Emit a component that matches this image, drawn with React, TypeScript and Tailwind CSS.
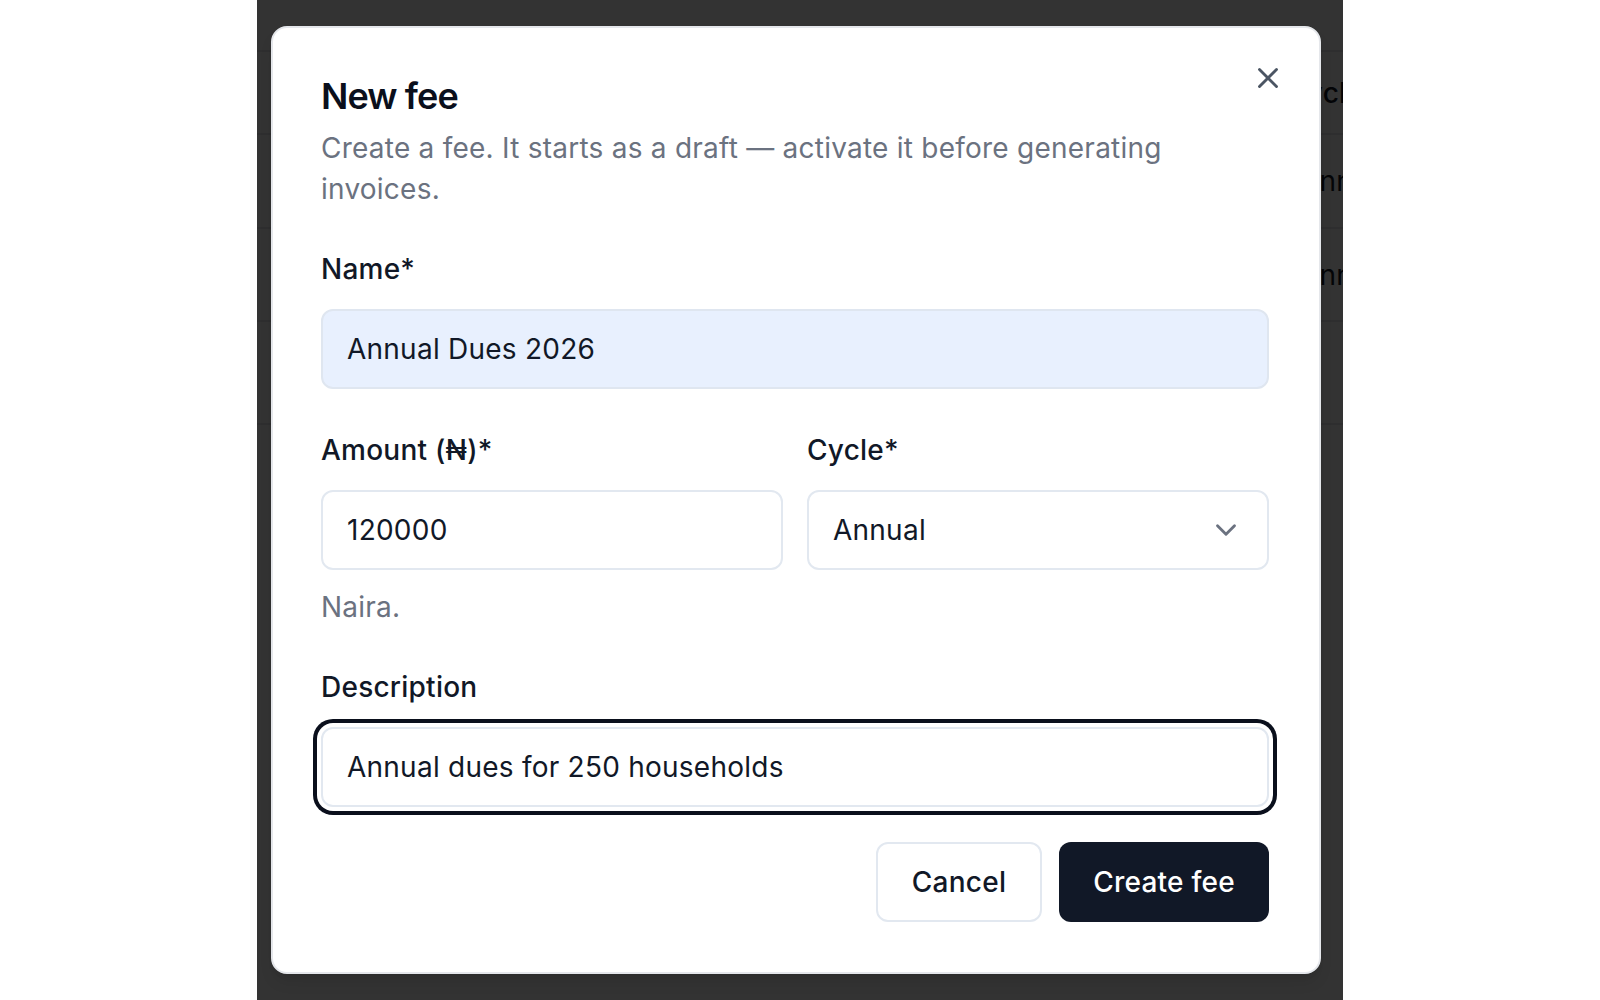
import { ChevronDown, X } from "lucide-react";

const rows = [
  { cycle: "Annual", h: "h-[94px]" },
  { cycle: "Annual", h: "h-[93px]" },
  { cycle: "", h: "h-[103px]" },
];

// table behind the backdrop; only the edge of the Cycle column peeks out
function FeesTable() {
  return (
    <div className="pt-[50px] text-[28px] text-[#111827]">
      <div className="flex h-[83px] items-center border-t-2 border-gray-200 font-medium">
        <div className="w-[1029px] shrink-0" />
        <div className="whitespace-nowrap">Cycle</div>
      </div>
      {rows.map((r, i) => (
        <div key={i} className={`flex items-center border-t-2 border-gray-200 ${r.h}`}>
          <div className="w-[1029px] shrink-0" />
          <div className="whitespace-nowrap pl-[14px]">{r.cycle}</div>
        </div>
      ))}
      <div className="border-t-2 border-gray-200" />
    </div>
  );
}

function Label({ children }: { children: React.ReactNode }) {
  return <label className="block text-[28px] leading-[40px] font-medium text-[#111827]">{children}</label>;
}

export default function App() {
  return (
    <div
      className="h-[1000px] w-full overflow-hidden bg-white tracking-[0.015em]"
      style={{ fontFamily: "Inter, 'Noto Sans', sans-serif" }}
    >
      <div className="relative ml-[257px] h-full w-[1086px] overflow-hidden bg-white">
        <FeesTable />

        {/* backdrop */}
        <div className="absolute inset-0 bg-black/80" />

        {/* dialog */}
        <div className="absolute left-[14px] top-[26px] w-[1050px] rounded-[16px] border-2 border-gray-200 bg-white pl-[48px] pr-[50px] pt-[46px] pb-[50px] shadow-lg">
          <button className="absolute right-[34px] top-[33px] flex text-[#4b5563]">
            <X size={34} strokeWidth={2} />
          </button>

          <h2 className="text-[36px] leading-[44px] font-semibold tracking-tight text-[#0a0f1c]">New fee</h2>
          <p className="mt-[10px] text-[28px] leading-[41px] text-[#6b7280]">
            Create a fee. It starts as a draft — activate it before generating invoices.
          </p>

          <div className="mt-[39px]">
            <Label>Name*</Label>
            <div className="mt-[20px] flex h-[80px] items-center rounded-[12px] border-2 border-[#dfe6f0] bg-[#e8f0fe] px-[24px] text-[28px] text-[#111827]">
              Annual Dues 2026
            </div>
          </div>

          <div className="mt-[41px] grid grid-cols-2 gap-[24px]">
            <div>
              <Label>Amount (₦)*</Label>
              <div className="mt-[20px] flex h-[80px] items-center rounded-[12px] border-2 border-[#e2e8f0] bg-white px-[24px] text-[28px] text-[#111827]">
                120000
              </div>
              <p className="mt-[17px] text-[28px] leading-[40px] text-[#6b7280]">Naira.</p>
            </div>
            <div>
              <Label>Cycle*</Label>
              <div className="mt-[20px] flex h-[80px] items-center justify-between rounded-[12px] border-2 border-[#e2e8f0] bg-white pl-[24px] pr-[24px] text-[28px] text-[#111827]">
                <span>Annual</span>
                <ChevronDown size={34} strokeWidth={2} className="text-[#6b7280]" />
              </div>
            </div>
          </div>

          <div className="mt-[40px]">
            <Label>Description</Label>
            <div className="mt-[20px] flex h-[80px] items-center rounded-[12px] border-2 border-[#e2e8f0] bg-white px-[24px] text-[28px] text-[#111827] ring-4 ring-[#0a0f1c] ring-offset-4 ring-offset-white">
              Annual dues for 250 households
            </div>
          </div>

          <div className="mt-[35px] flex justify-end gap-[17px]">
            <button className="h-[80px] rounded-[12px] border-2 border-[#e2e8f0] bg-white px-[34px] text-[28px] font-medium text-[#111827]">
              Cancel
            </button>
            <button className="h-[80px] rounded-[12px] bg-[#111827] px-[34px] text-[28px] font-medium text-white">
              Create fee
            </button>
          </div>
        </div>
      </div>
    </div>
  );
}
